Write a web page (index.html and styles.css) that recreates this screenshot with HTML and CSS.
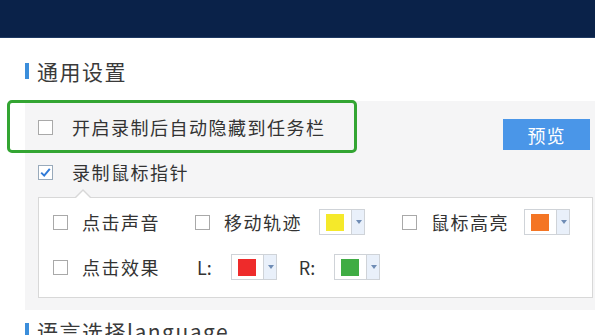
FILE: index.html
```html
<!DOCTYPE html>
<html lang="zh">
<head>
<meta charset="utf-8">
<link rel="stylesheet" href="styles.css">
</head>
<body>
<header class="topbar"></header>
<main class="content">
  <h2 class="section-title">通用设置</h2>
  <div class="panel">
    <div class="row row-hide">
      <label class="opt"><span class="cb"></span><span class="txt">开启录制后自动隐藏到任务栏</span></label>
      <button class="btn">预览</button>
      <div class="highlight"></div>
    </div>
    <div class="row row-cursor">
      <label class="opt"><span class="cb checked"><svg viewBox="0 0 15 15" width="15" height="15"><path d="M3.2 7.6 L6.2 10.6 L11.8 3.8" fill="none" stroke="#2f7ad8" stroke-width="2"/></svg></span><span class="txt">录制鼠标指针</span></label>
    </div>
    <div class="subbox">
      <div class="subrow">
        <label class="opt col1"><span class="cb"></span><span class="txt">点击声音</span></label>
        <label class="opt"><span class="cb"></span><span class="txt">移动轨迹</span></label>
        <span class="picker p-track"><span class="swatch" style="background:#f5e92a"></span><span class="arrow"></span></span>
        <label class="opt o-hl"><span class="cb"></span><span class="txt">鼠标高亮</span></label>
        <span class="picker p-hl"><span class="swatch" style="background:#f47524"></span><span class="arrow"></span></span>
      </div>
      <div class="subrow">
        <label class="opt col1"><span class="cb"></span><span class="txt">点击效果</span></label>
        <span class="lbl lbl-l">L:</span>
        <span class="picker p-l"><span class="swatch" style="background:#ee2b2b"></span><span class="arrow"></span></span>
        <span class="lbl lbl-r">R:</span>
        <span class="picker p-r"><span class="swatch" style="background:#3fac44"></span><span class="arrow"></span></span>
      </div>
    </div>
  </div>
  <h2 class="section-title second">语言选择language</h2>
</main>
</body>
</html>
```
FILE: styles.css
```css
html, body {
  margin: 0;
  padding: 0;
  background: #fff;
  overflow: hidden;
}
body {
  font-family: "Noto Sans CJK SC", "Microsoft YaHei", sans-serif;
  color: #333;
  width: 595px;
  height: 335px;
}
.topbar {
  height: 37px;
  background: #0a2249;
  border-bottom: 1px solid #1f3a63;
}
.content {
  padding-left: 25px;
}
.section-title {
  margin: 18px 0 15px;
  height: 30px;
  display: flex;
  align-items: center;
  font-size: 21px;
  font-weight: normal;
  color: #3a3a3a;
  letter-spacing: 1.5px;
}
.section-title::before {
  content: "";
  width: 4px;
  height: 16px;
  background: #3b8edb;
  margin-right: 8px;
}
.section-title.second {
  margin-top: 6px;
}
.panel {
  background: #f5f5f6;
  padding: 0 2px 12px 13px;
}
.row {
  display: flex;
  align-items: center;
  position: relative;
}
.row-hide {
  height: 52px;
}
.row-cursor {
  height: 38px;
}
.opt {
  display: flex;
  align-items: center;
  font-size: 18px;
  letter-spacing: 1.5px;
  color: #333;
}
.cb {
  width: 13px;
  height: 13px;
  border: 1px solid #a9a9a9;
  background: #fff;
  margin-right: 19px;
  flex: none;
  position: relative;
}
.cb svg {
  position: absolute;
  left: -1px;
  top: -1px;
}
.cb.checked {
  border-color: #9ab;
}
.btn {
  margin-left: auto;
  margin-right: 3px;
  align-self: flex-end;
  margin-bottom: 3px;
  width: 87px;
  height: 31px;
  border: none;
  background: #4a96e8;
  color: #fff;
  font-family: inherit;
  font-size: 18px;
  letter-spacing: 1px;
  padding: 0;
}
.highlight {
  position: absolute;
  left: -31px;
  top: -1px;
  width: 344px;
  height: 47px;
  border: 3px solid #33a532;
  border-radius: 5px;
  pointer-events: none;
}
.subbox {
  margin-top: 6px;
  background: #fff;
  border: 1px solid #d8d8d8;
  padding: 11px 0 17px 14px;
  position: relative;
  display: flex;
  flex-direction: column;
  gap: 19px;
}
.subbox::before,
.subbox::after {
  content: "";
  position: absolute;
  left: 35px;
  top: -18px;
  border: 9px solid transparent;
  border-bottom-color: #d8d8d8;
}
.subbox::after {
  top: -16px;
  border-bottom-color: #fff;
}
.subrow {
  display: flex;
  align-items: center;
  height: 26px;
}
.subrow .cb {
  margin-right: 14px;
}
.col1 {
  width: 142px;
}
.p-track { margin-left: 17px; }
.o-hl { margin-left: 37px; }
.p-hl { margin-left: 15px; }
.lbl {
  font-size: 18px;
  color: #333;
}
.lbl-l { margin-left: 2px; }
.p-l { margin-left: 19px; }
.lbl-r { margin-left: 22px; }
.p-r { margin-left: 19px; }
.picker {
  display: flex;
  width: 44px;
  height: 24px;
  border: 1px solid #cfd3d8;
  background: #fff;
  flex: none;
}
.swatch {
  width: 18px;
  height: 17px;
  margin: 4px 7px 0 6px;
}
.arrow {
  flex: 1;
  border-left: 1px solid #cfd3d8;
  background: #e9f0fa;
  position: relative;
}
.arrow::after {
  content: "";
  position: absolute;
  left: 4px;
  top: 10px;
  border: 3px solid transparent;
  border-top: 4px solid #6f8cb5;
  border-bottom: none;
}
```
